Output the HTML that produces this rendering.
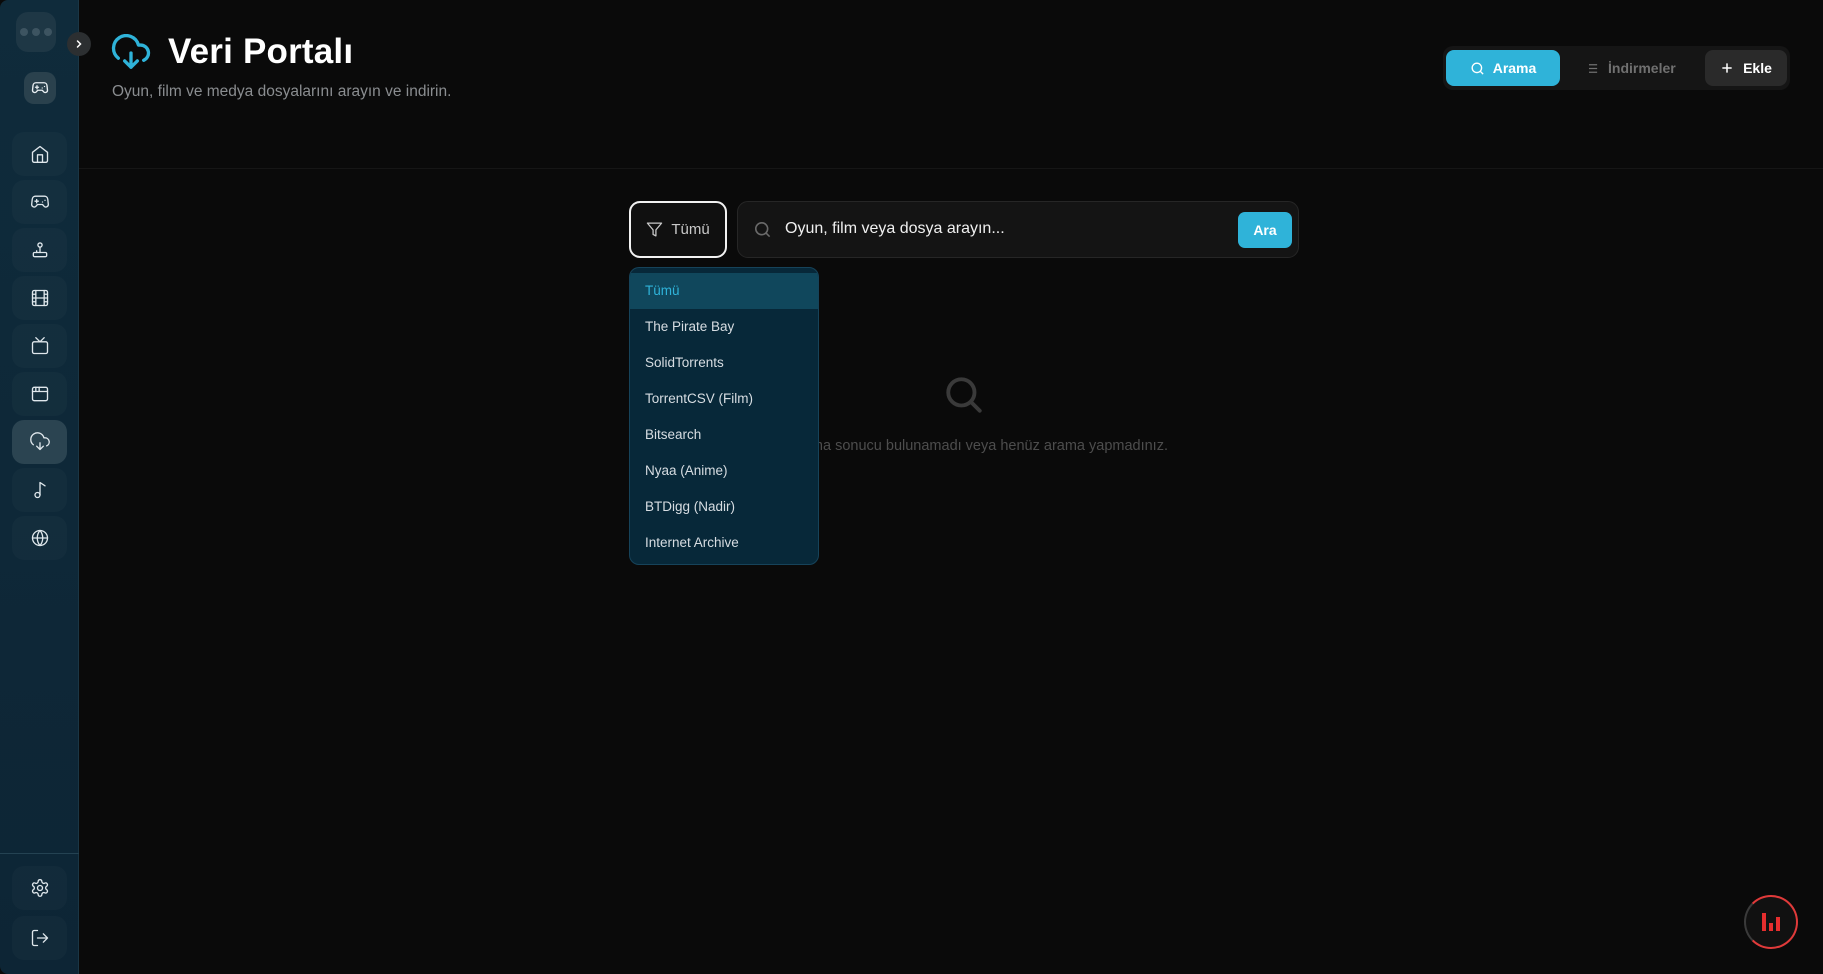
<!DOCTYPE html>
<html><head><meta charset="utf-8">
<style>
*{box-sizing:border-box;margin:0;padding:0}
body{width:1823px;height:974px;background:#0a0a0a;font-family:"Liberation Sans",sans-serif;position:relative;overflow:hidden;color:#fff}
.abs{position:absolute}
.sb{left:0;top:0;width:79px;height:974px;background:linear-gradient(180deg,#0f2b3b,#0d2535);border-right:1px solid #1a3645;border-radius:8px 0 0 8px}
.it{position:absolute;left:12px;width:55px;height:44px;border-radius:12px;background:rgba(255,255,255,0.025);display:flex;align-items:center;justify-content:center}
.it svg{width:20px;height:20px;fill:none;stroke:#dfe7ec;stroke-width:1.6;stroke-linecap:round;stroke-linejoin:round}
.dd div{height:36px;line-height:36px;padding-left:15px;font-size:13.5px;color:#d7dde2}
</style></head><body>
<div class="abs sb">
  <div class="abs" style="left:16px;top:12px;width:40px;height:40px;border-radius:12px;background:#1e3745;display:flex;align-items:center;justify-content:center;gap:4px">
    <span style="width:8px;height:8px;border-radius:50%;background:#3d5461"></span><span style="width:8px;height:8px;border-radius:50%;background:#3d5461"></span><span style="width:8px;height:8px;border-radius:50%;background:#3d5461"></span>
  </div>
  <div class="abs" style="left:24px;top:72px;width:32px;height:32px;border-radius:10px;background:#2a414d;display:flex;align-items:center;justify-content:center">
    <svg width="18" height="18" viewBox="0 0 24 24" fill="none" stroke="#e8eef2" stroke-width="1.8" stroke-linecap="round"><path d="M6 11h4M8 9v4M15 12h.01M18 10h.01"/><path d="M17.3 5H6.7a4 4 0 0 0-4 3.6L2 15a3 3 0 0 0 5.4 1.8L9 15h6l1.6 1.8A3 3 0 0 0 22 15l-.7-6.4A4 4 0 0 0 17.3 5z"/></svg>
  </div>
  <div class="it" style="top:132px"><svg viewBox="0 0 24 24"><path d="M3 10l9-7 9 7v10a2 2 0 0 1-2 2H5a2 2 0 0 1-2-2z"/><path d="M9 22V13h6v9"/></svg></div>
  <div class="it" style="top:180px"><svg viewBox="0 0 24 24"><path d="M6 11h4M8 9v4M15 12h.01M18 10h.01"/><path d="M17.3 5H6.7a4 4 0 0 0-4 3.6L2 15a3 3 0 0 0 5.4 1.8L9 15h6l1.6 1.8A3 3 0 0 0 22 15l-.7-6.4A4 4 0 0 0 17.3 5z"/></svg></div>
  <div class="it" style="top:228px"><svg viewBox="0 0 24 24"><circle cx="12" cy="6" r="2.5"/><path d="M12 8.5V15"/><rect x="4" y="15" width="16" height="5" rx="1.5"/><path d="M8 15v-2"/></svg></div>
  <div class="it" style="top:276px"><svg viewBox="0 0 24 24"><rect x="3" y="3" width="18" height="18" rx="2"/><path d="M7 3v18M17 3v18M3 7.5h4M3 12h18M3 16.5h4M17 7.5h4M17 16.5h4"/></svg></div>
  <div class="it" style="top:324px"><svg viewBox="0 0 24 24"><rect x="3" y="7" width="18" height="14" rx="2"/><path d="M17 2l-5 5-5-5"/></svg></div>
  <div class="it" style="top:372px"><svg viewBox="0 0 24 24"><rect x="3" y="4" width="18" height="16" rx="2"/><path d="M3 9h18M7 4v5M11 4v5"/></svg></div>
  <div class="it" style="top:420px;background:#2b4451"><svg viewBox="0 0 24 24"><path d="M12 13v8M8 17l4 4 4-4"/><path d="M20 16.6A5 5 0 0 0 18 7h-1.3A8 8 0 1 0 4 15.3"/></svg></div>
  <div class="it" style="top:468px"><svg viewBox="0 0 24 24"><circle cx="9" cy="18" r="3"/><path d="M12 18V3l6 4"/></svg></div>
  <div class="it" style="top:516px"><svg viewBox="0 0 24 24"><circle cx="12" cy="12" r="9"/><path d="M3 12h18M12 3a14 14 0 0 1 0 18M12 3a14 14 0 0 0 0 18"/></svg></div>
  <div class="abs" style="left:0;top:853px;width:79px;height:1px;background:#244252"></div>
  <div class="it" style="top:866px"><svg viewBox="0 0 24 24"><circle cx="12" cy="12" r="3"/><path d="M12.2 2h-.4a2 2 0 0 0-2 2v.2a2 2 0 0 1-1 1.7l-.4.3a2 2 0 0 1-2 0l-.2-.1a2 2 0 0 0-2.7.7l-.2.4a2 2 0 0 0 .7 2.7l.2.1a2 2 0 0 1 1 1.7v.5a2 2 0 0 1-1 1.7l-.2.1a2 2 0 0 0-.7 2.7l.2.4a2 2 0 0 0 2.7.7l.2-.1a2 2 0 0 1 2 0l.4.3a2 2 0 0 1 1 1.7v.2a2 2 0 0 0 2 2h.4a2 2 0 0 0 2-2v-.2a2 2 0 0 1 1-1.7l.4-.3a2 2 0 0 1 2 0l.2.1a2 2 0 0 0 2.7-.7l.2-.4a2 2 0 0 0-.7-2.7l-.2-.1a2 2 0 0 1-1-1.7v-.5a2 2 0 0 1 1-1.7l.2-.1a2 2 0 0 0 .7-2.7l-.2-.4a2 2 0 0 0-2.7-.7l-.2.1a2 2 0 0 1-2 0l-.4-.3a2 2 0 0 1-1-1.7V4a2 2 0 0 0-2-2z"/></svg></div>
  <div class="it" style="top:916px"><svg viewBox="0 0 24 24"><path d="M9 21H5a2 2 0 0 1-2-2V5a2 2 0 0 1 2-2h4M16 17l5-5-5-5M21 12H9"/></svg></div>
</div>
<div class="abs" style="left:67px;top:32px;width:24px;height:24px;border-radius:50%;background:#2c2f31;display:flex;align-items:center;justify-content:center">
  <svg width="12" height="12" viewBox="0 0 24 24" fill="none" stroke="#fff" stroke-width="3" stroke-linecap="round"><path d="M9 6l6 6-6 6"/></svg>
</div>

<svg class="abs" style="left:111px;top:34px" width="40" height="38" viewBox="0 0 24 24" fill="none" stroke="#2fb3d9" stroke-width="2.1" stroke-linecap="round" stroke-linejoin="round"><path d="M12 12v9M8 17l4 4 4-4"/><path d="M20 16.6A5 5 0 0 0 18 7h-1.3A8 8 0 1 0 4 15.3"/></svg>
<div class="abs" style="left:168px;top:32px;font-size:35px;font-weight:bold;letter-spacing:0.2px">Veri Portalı</div>
<div class="abs" style="left:112px;top:83px;font-size:15.5px;color:#8a8d90">Oyun, film ve medya dosyalarını arayın ve indirin.</div>
<div class="abs" style="left:79px;top:168px;width:1744px;height:1px;background:#161616"></div>

<div class="abs" style="left:1443px;top:46px;width:347px;height:44px;border-radius:10px;background:#151515"></div>
<div class="abs" style="left:1446px;top:50px;width:114px;height:36px;border-radius:8px;background:#2fb3d9;display:flex;align-items:center;justify-content:center;gap:8px;font-size:14px;font-weight:bold">
  <svg width="15" height="15" viewBox="0 0 24 24" fill="none" stroke="#fff" stroke-width="2.2"><circle cx="11" cy="11" r="7.5"/><path d="M21 21l-4.5-4.5"/></svg>Arama</div>
<div class="abs" style="left:1584px;top:50px;width:110px;height:36px;display:flex;align-items:center;gap:9px;font-size:14px;font-weight:bold;color:#707070">
  <svg width="15" height="15" viewBox="0 0 24 24" fill="none" stroke="#707070" stroke-width="2"><path d="M8 6h13M8 12h13M8 18h13M3 6h.01M3 12h.01M3 18h.01"/></svg>İndirmeler</div>
<div class="abs" style="left:1705px;top:50px;width:82px;height:36px;border-radius:8px;background:#2a2a2a;display:flex;align-items:center;justify-content:center;gap:9px;font-size:14px;font-weight:bold">
  <svg width="14" height="14" viewBox="0 0 24 24" fill="none" stroke="#fff" stroke-width="2.6"><path d="M12 4v16M4 12h16"/></svg>Ekle</div>

<div class="abs" style="left:629px;top:201px;width:98px;height:57px;border:2px solid #f2f2f2;border-radius:11px;background:#101010;display:flex;align-items:center;justify-content:center;gap:8px;font-size:15px;color:#c9c9c9">
  <svg width="17" height="17" viewBox="0 0 24 24" fill="none" stroke="#c9c9c9" stroke-width="1.8" stroke-linejoin="round"><path d="M22 3H2l8 9.5V19l4 2v-8.5z"/></svg>Tümü</div>
<div class="abs" style="left:737px;top:201px;width:562px;height:57px;border:1px solid #262626;border-radius:11px;background:#141414"></div>
<svg class="abs" style="left:753px;top:220px" width="19" height="19" viewBox="0 0 24 24" fill="none" stroke="#6a6a6a" stroke-width="2"><circle cx="11" cy="11" r="7.5"/><path d="M21 21l-4.5-4.5"/></svg>
<div class="abs" style="left:785px;top:220px;font-size:16px;color:#f0f0f0">Oyun, film veya dosya arayın...</div>
<div class="abs" style="left:1238px;top:212px;width:54px;height:36px;border-radius:7px;background:#2fb3d9;font-size:14px;font-weight:bold;text-align:center;line-height:36px">Ara</div>

<svg class="abs" style="left:943px;top:374px" width="42" height="42" viewBox="0 0 24 24" fill="none" stroke="#3a3a3a" stroke-width="2.2" stroke-linecap="round"><circle cx="10.5" cy="10.5" r="7.5"/><path d="M21 21l-5-5"/></svg>
<div class="abs" style="left:760px;top:438px;width:408px;text-align:right;font-size:14.5px;color:#4d4d4d">Arama sonucu bulunamadı veya henüz arama yapmadınız.</div>

<div class="abs dd" style="left:629px;top:267px;width:190px;height:298px;border:1px solid #16435a;border-radius:10px;background:#072839;overflow:hidden;padding-top:5px">
  <div style="background:#10475c;color:#2fb3d9">Tümü</div>
  <div>The Pirate Bay</div><div>SolidTorrents</div><div>TorrentCSV (Film)</div><div>Bitsearch</div><div>Nyaa (Anime)</div><div>BTDigg (Nadir)</div><div>Internet Archive</div>
</div>

<div class="abs" style="left:1744px;top:895px;width:54px;height:54px;border-radius:50%;border:2px solid #e03a3a;border-left-color:#3a3a3a;background:#111;display:flex;align-items:center;justify-content:center;gap:3px">
  <span style="width:4px;height:18px;background:#e52e2e"></span><span style="width:4px;height:8px;background:#e52e2e;margin-top:10px"></span><span style="width:4px;height:14px;background:#e52e2e;margin-top:4px"></span>
</div>
</body></html>
